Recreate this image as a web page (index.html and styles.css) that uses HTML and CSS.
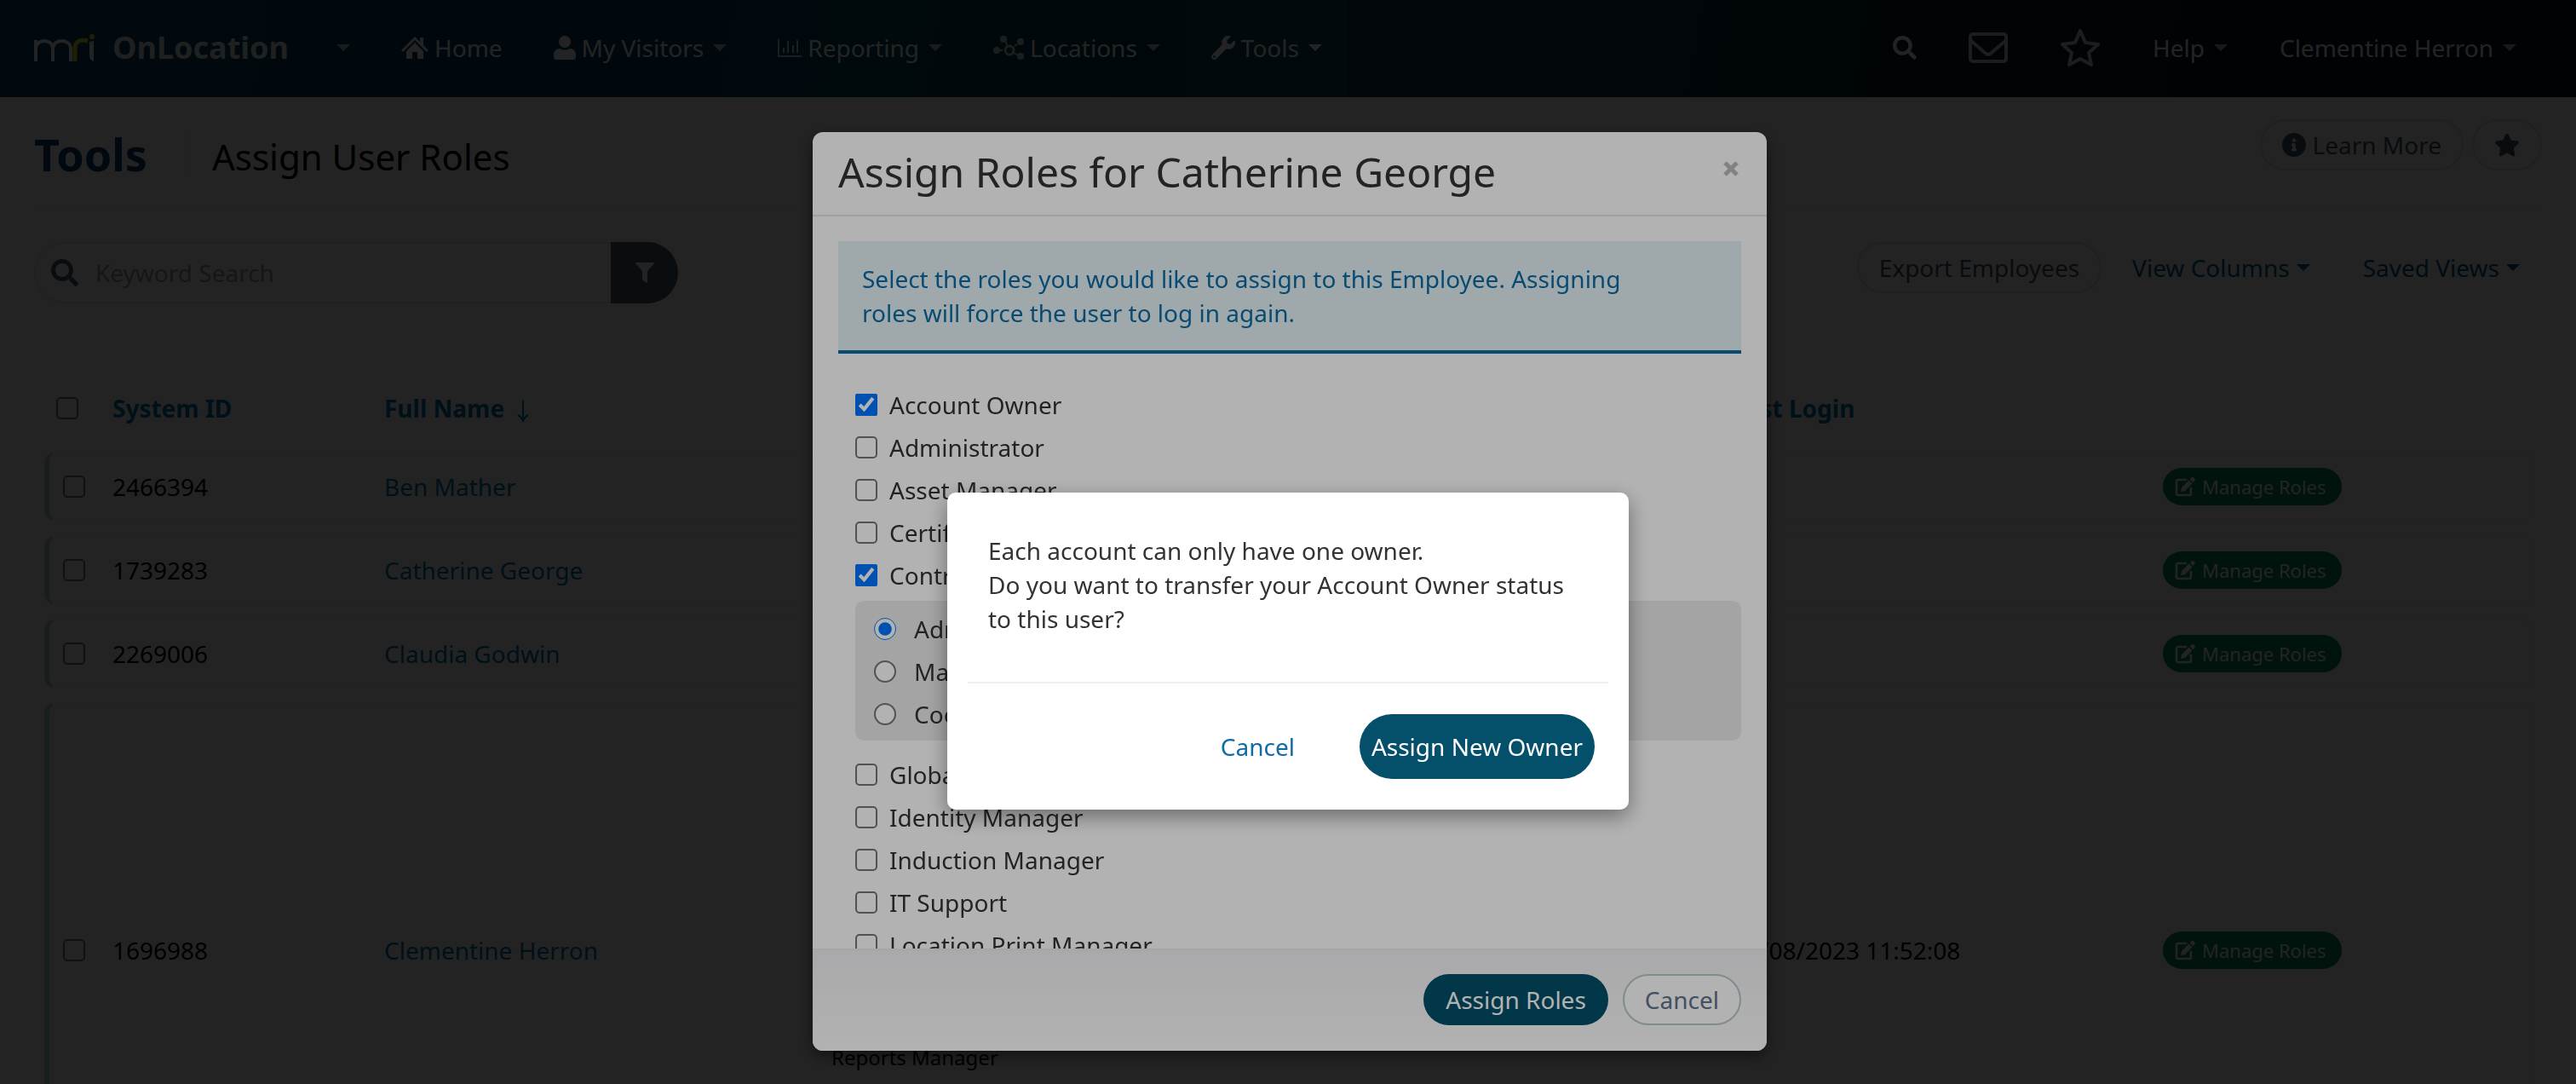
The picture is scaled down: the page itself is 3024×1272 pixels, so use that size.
FILE: index.html
```html
<!DOCTYPE html>
<html lang="en">
<head>
  <meta charset="UTF-8">
  <meta name="viewport" content="width=device-width, initial-scale=1.0">
  <title>Assign User Roles</title>
  <link rel="stylesheet" href="styles.css">
</head>
<body>

<!-- Shared icons -->
<svg class="icon-defs" aria-hidden="true">
  <symbol id="icon-search" viewBox="0 0 512 512"><path d="M505 442.7L405.3 343c-4.5-4.5-10.6-7-17-7H372c27.6-35.3 44-79.7 44-128C416 93.1 322.9 0 208 0S0 93.1 0 208s93.1 208 208 208c48.3 0 92.7-16.4 128-44v16.3c0 6.4 2.5 12.5 7 17l99.7 99.7c9.4 9.4 24.6 9.4 33.9 0l28.3-28.3c9.4-9.4 9.4-24.6.1-34zM208 336c-70.7 0-128-57.2-128-128 0-70.7 57.2-128 128-128 70.7 0 128 57.2 128 128 0 70.7-57.2 128-128 128z"/></symbol>
  <symbol id="icon-edit" viewBox="0 0 24 24"><path d="M14 4H4a2 2 0 0 0-2 2v14a2 2 0 0 0 2 2h13a2 2 0 0 0 2-2v-7" fill="none" stroke="currentColor" stroke-width="2.6"/><path d="M16.5 4.5l4 4-8.500 8.500-5 1 1-5zM17.700 3.300l2-2c.7-.7 1.600-.7 2.300 0l1.400 1.400c.7.7.7 1.600 0 2.300l-2 2z"/></symbol>
</svg>

<nav class="navbar">
  <a class="brand" href="#">
    <svg class="brand-logo" viewBox="0 0 72 32" aria-hidden="true">
      <path d="M2 32V7M2 17C2 5 22 5 22 17V32M22 17C22 5 43 5 43 17V32" fill="none" stroke="#fff" stroke-width="4"/>
      <path d="M48 32V17C48 8 54 6 63 8" fill="none" stroke="#d9e021" stroke-width="5"/>
      <circle cx="68" cy="3" r="3" fill="#d9e021"/>
      <path d="M65 9l5-1v24c-3-1-5-3-5-6z" fill="#fff"/>
    </svg>
    <span>OnLocation</span>
  </a>
  <button class="nav-item" aria-label="Switch product"><i class="caret"></i></button>
  <a class="nav-item" href="#">
    <svg class="icon-home" viewBox="0 0 32 26" aria-hidden="true"><path d="M16 0l6 6V1h4v9l6 6-2 2L16 4 2 18l-2-2z"/><path d="M16 7l10 10v9h-7v-8h-6v8H6v-9z"/></svg>
    Home
  </a>
  <a class="nav-item" href="#">
    <svg class="icon-user" viewBox="0 0 26 28" aria-hidden="true"><circle cx="13" cy="7" r="7"/><path d="M0 25v-3c0-4 3-7 7-7 4 2 8 2 12 0 4 0 7 3 7 7v3c0 2-1 3-3 3H3c-2 0-3-1-3-3z"/></svg>
    My Visitors <i class="caret"></i>
  </a>
  <a class="nav-item" href="#">
    <svg class="icon-chart" viewBox="0 0 28 22" aria-hidden="true"><path d="M1 0v21h27M7 17v-6M12 17V3M18 17V8M23 17V2" fill="none" stroke="currentColor" stroke-width="2"/></svg>
    Reporting <i class="caret"></i>
  </a>
  <a class="nav-item" href="#">
    <svg class="icon-nodes" viewBox="0 0 36 28" aria-hidden="true"><circle cx="19" cy="17" r="5" fill="none" stroke="currentColor" stroke-width="3"/><path d="M13 4l4 9M22 19l9 5M25 12l3-2M8 17h3" stroke="currentColor" stroke-width="2"/><circle cx="12" cy="4" r="4"/><circle cx="32" cy="7" r="4"/><circle cx="4" cy="17" r="4"/><circle cx="32" cy="24" r="4"/></svg>
    Locations <i class="caret"></i>
  </a>
  <a class="nav-item active" href="#">
    <svg class="icon-wrench" viewBox="0 0 512 512" aria-hidden="true"><path d="M507.73 109.1c-2.24-9.03-13.54-12.09-20.12-5.51l-74.36 74.36-67.88-11.31-11.31-67.88 74.36-74.36c6.62-6.62 3.43-17.9-5.66-20.16-47.38-11.74-99.55.91-136.58 37.93-39.64 39.64-50.55 97.1-34.05 147.2L18.74 402.76c-24.99 24.99-24.99 65.51 0 90.5 24.99 24.99 65.51 24.99 90.5 0l213.21-213.21c50.12 16.71 107.47 5.68 147.37-34.22 37.07-37.07 49.7-89.32 37.91-136.73zM64 472c-13.25 0-24-10.75-24-24 0-13.26 10.75-24 24-24s24 10.74 24 24c0 13.25-10.75 24-24 24z"/></svg>
    Tools <i class="caret"></i>
  </a>

  <div class="nav-right">
    <button class="nav-item" aria-label="Search"><svg class="icon-nav-search"><use href="#icon-search"/></svg></button>
    <button class="nav-item" aria-label="Messages">
      <svg class="icon-mail" viewBox="0 0 46 36"><rect x="2" y="2" width="42" height="32" rx="3" fill="none" stroke="currentColor" stroke-width="4"/><path d="M3 10l15 13c4 4 6 4 10 0l15-13" fill="none" stroke="currentColor" stroke-width="4"/></svg>
    </button>
    <button class="nav-item" aria-label="Favourites">
      <svg class="icon-star-outline" viewBox="0 0 48 46"><path d="M24 3l6 14 15 2L34 29l3 14L24 36l-13 7L14 29 3 19l15-2z" fill="none" stroke="currentColor" stroke-width="4" stroke-linejoin="round"/></svg>
    </button>
    <a class="nav-item" href="#">Help <i class="caret"></i></a>
    <a class="nav-item" href="#">Clementine Herron <i class="caret"></i></a>
  </div>
</nav>

<main class="page">
  <header class="page-header">
    <h1>Tools</h1>
    <h2>Assign User Roles</h2>
    <div class="page-actions">
      <button class="btn btn-outline">
        <svg class="icon-info" viewBox="8 8 496 496" aria-hidden="true"><path d="M256 8C119.043 8 8 119.083 8 256c0 136.997 111.043 248 248 248s248-111.003 248-248C504 119.083 392.957 8 256 8zm0 110c23.196 0 42 18.804 42 42s-18.804 42-42 42-42-18.804-42-42 18.804-42 42-42zm56 254c0 6.627-5.373 12-12 12h-88c-6.627 0-12-5.373-12-12v-24c0-6.627 5.373-12 12-12h12v-64h-12c-6.627 0-12-5.373-12-12v-24c0-6.627 5.373-12 12-12h64c6.627 0 12 5.373 12 12v100h12c6.627 0 12 5.373 12 12v24z"/></svg>
        Learn More
      </button>
      <button class="btn btn-outline" aria-label="Add to favourites">
        <svg class="icon-star" viewBox="0 0 576 512"><path d="M259.3 17.8L194 150.2 47.9 171.5c-26.2 3.8-36.7 36.1-17.7 54.6l105.7 103-25 145.5c-4.5 26.3 23.2 46 46.4 33.7L288 439.6l130.7 68.7c23.2 12.2 50.9-7.4 46.4-33.7l-25-145.5 105.7-103c19-18.5 8.5-50.8-17.7-54.6L382 150.2 316.7 17.8c-11.7-23.6-45.6-23.9-57.4 0z"/></svg>
      </button>
    </div>
  </header>

  <div class="toolbar">
    <div class="search-box">
      <svg class="icon-search" aria-hidden="true"><use href="#icon-search"/></svg>
      <input type="text" placeholder="Keyword Search" aria-label="Keyword Search">
      <button class="filter-btn" aria-label="Filter"><svg viewBox="0 0 22 24"><path d="M1 0h20c1 0 1 1 .5 2L14 10v13c0 1-1 1-2 .5L9 21c-.7-.6-1-1-1-2v-9L.5 2C0 1 0 0 1 0z"/></svg></button>
    </div>
    <div class="toolbar-actions">
      <button class="btn btn-outline">Export Employees</button>
      <a class="menu-link" href="#">View Columns <i class="caret"></i></a>
      <a class="menu-link" href="#">Saved Views <i class="caret"></i></a>
    </div>
  </div>

  <table class="users">
    <colgroup>
      <col class="col-check"><col class="col-id"><col class="col-name"><col><col class="col-login"><col class="col-manage">
    </colgroup>
    <thead>
      <tr>
        <th><input type="checkbox" aria-label="Select all"></th>
        <th>System ID</th>
        <th>Full Name <svg class="icon-sort" viewBox="0 0 14 26" aria-hidden="true"><path d="M7 0v25M1 18q4 2 6 7q2-5 6-7" fill="none" stroke="currentColor" stroke-width="2"/></svg></th>
        <th>Roles</th>
        <th>Last Login</th>
        <th></th>
      </tr>
    </thead>
    <tbody>
      <tr>
        <td><input type="checkbox" aria-label="Select Ben Mather"></td>
        <td>2466394</td>
        <td><a href="#">Ben Mather</a></td>
        <td></td>
        <td></td>
        <td><button class="manage-btn"><svg><use href="#icon-edit"/></svg>Manage Roles</button></td>
      </tr>
      <tr>
        <td><input type="checkbox" aria-label="Select Catherine George"></td>
        <td>1739283</td>
        <td><a href="#">Catherine George</a></td>
        <td></td>
        <td></td>
        <td><button class="manage-btn"><svg><use href="#icon-edit"/></svg>Manage Roles</button></td>
      </tr>
      <tr>
        <td><input type="checkbox" aria-label="Select Claudia Godwin"></td>
        <td>2269006</td>
        <td><a href="#">Claudia Godwin</a></td>
        <td></td>
        <td></td>
        <td><button class="manage-btn"><svg><use href="#icon-edit"/></svg>Manage Roles</button></td>
      </tr>
      <tr class="current-user">
        <td><input type="checkbox" aria-label="Select Clementine Herron"></td>
        <td>1696988</td>
        <td><a href="#">Clementine Herron</a></td>
        <td>
          <ul class="role-names">
            <li>Account Owner</li>
            <li>Administrator</li>
            <li>Asset Manager</li>
            <li>Contractor Manager</li>
            <li>Global Manager</li>
            <li>Identity Manager</li>
            <li>Induction Manager</li>
            <li>IT Support</li>
            <li>Location Print Manager</li>
            <li>Reports Manager</li>
            <li>Security Manager</li>
            <li>Vehicle Manager</li>
            <li>Visitor Manager</li>
          </ul>
        </td>
        <td>03/08/2023 11:52:08</td>
        <td><button class="manage-btn"><svg><use href="#icon-edit"/></svg>Manage Roles</button></td>
      </tr>
    </tbody>
  </table>
</main>

<!-- Assign roles modal -->
<div class="overlay overlay-modal">
  <form class="modal" role="dialog" aria-labelledby="modal-title">
    <div class="modal-header">
      <h3 id="modal-title">Assign Roles for Catherine George</h3>
      <button type="button" class="close" aria-label="Close"><svg viewBox="0 0 20 20"><path d="M3 3l14 14M17 3L3 17" stroke="currentColor" stroke-width="5"/></svg></button>
    </div>
    <div class="modal-body">
      <p class="alert">Select the roles you would like to assign to this Employee. Assigning roles will force the user to log in again.</p>
      <div class="roles">
        <label><input type="checkbox" checked>Account Owner</label>
        <label><input type="checkbox">Administrator</label>
        <label><input type="checkbox">Asset Manager</label>
        <label><input type="checkbox">Certification Manager</label>
        <label><input type="checkbox" checked>Contractor Manager</label>
        <div class="sub-roles">
          <label><input type="radio" name="contractor" checked>Administrator</label>
          <label><input type="radio" name="contractor">Manager</label>
          <label><input type="radio" name="contractor">Coordinator</label>
        </div>
        <label><input type="checkbox">Global Manager</label>
        <label><input type="checkbox">Identity Manager</label>
        <label><input type="checkbox">Induction Manager</label>
        <label><input type="checkbox">IT Support</label>
        <label><input type="checkbox">Location Print Manager</label>
      </div>
    </div>
    <div class="modal-footer">
      <button type="button" class="btn btn-primary">Assign Roles</button>
      <button type="button" class="btn btn-cancel">Cancel</button>
    </div>
  </form>
</div>

<!-- Owner transfer confirmation -->
<div class="overlay overlay-confirm">
  <div class="confirm" role="alertdialog" aria-label="Transfer account owner">
    <p>Each account can only have one owner.<br>Do you want to transfer your Account Owner status to this user?</p>
    <div class="confirm-footer">
      <button class="btn-link">Cancel</button>
      <button class="btn-confirm">Assign New Owner</button>
    </div>
  </div>
</div>

</body>
</html>
```
FILE: styles.css
```css
* {
  box-sizing: border-box;
}

body {
  margin: 0;
  height: 100vh;
  overflow: hidden;
  font-family: "Noto Sans", sans-serif;
  font-size: 28px;
  line-height: 40px;
  color: #000;
  background-color: #fff;
}

h1, h2, h3, p, ul {
  margin: 0;
  padding: 0;
}

a {
  text-decoration: none;
}

button {
  font: inherit;
  color: inherit;
  background: none;
  border: none;
  padding: 0;
  cursor: pointer;
}

svg {
  fill: currentColor;
  flex-shrink: 0;
}

input[type="checkbox"],
input[type="radio"] {
  width: 26px;
  height: 26px;
  margin: 0;
  flex-shrink: 0;
}

input[type="checkbox"]:not(:checked),
input[type="radio"]:not(:checked) {
  appearance: none;
  border: 2px solid #767676;
  border-radius: 5px;
  background-color: #fff;
}

input[type="radio"]:not(:checked) {
  border-radius: 50%;
}

.icon-defs {
  display: none;
}

.caret {
  display: inline-block;
  border: 8px solid transparent;
  border-top-color: currentColor;
  border-bottom: none;
}

/* Navbar */
.navbar {
  display: flex;
  height: 114px;
  padding: 0 40px;
  color: #fff;
  background: linear-gradient(100deg, #0c3c6c 0%, #07405c 35%, #023244 60%, #001028 100%);
}

.brand {
  display: flex;
  align-items: center;
  gap: 20px;
  padding: 0 22px 2px 0;
  font-size: 36px;
  font-weight: bold;
  color: #e0e6e8;
}

.brand-logo {
  width: 72px;
  height: 32px;
}

.nav-item {
  display: flex;
  align-items: center;
  gap: 7px;
  padding: 0 30px 2px;
  color: #fff;
}

.nav-item .caret {
  margin-left: 4px;
  opacity: 0.7;
}

.nav-item.active {
  background-color: rgba(255, 255, 255, 0.08);
}

.nav-item.active .caret {
  opacity: 1;
}

.nav-right {
  display: flex;
  gap: 1px;
  margin-left: auto;
}

.icon-home { width: 32px; height: 26px; }
.icon-user { width: 26px; height: 28px; }
.icon-chart { width: 28px; height: 22px; opacity: 0.8; }
.icon-nodes { width: 36px; height: 28px; opacity: 0.8; }
.icon-wrench { width: 28px; height: 28px; }
.icon-nav-search { width: 28px; height: 28px; }
.icon-mail { width: 46px; height: 36px; opacity: 0.8; }
.icon-star-outline { width: 48px; height: 46px; opacity: 0.8; }

/* Page header */
.page {
  padding: 0 40px;
}

.page-header {
  display: flex;
  align-items: center;
  height: 130px;
  padding-top: 6px;
  border-bottom: 2px solid #f4f5f6;
}

.page-header h1 {
  padding-right: 44px;
  border-right: 2px solid #f4f5f6;
  font-size: 52px;
  line-height: 52px;
  color: #0b3c74;
}

.page-header h2 {
  padding: 6px 0 0 30px;
  font-size: 42px;
  font-weight: normal;
}

.page-actions {
  display: flex;
  gap: 10px;
  margin-left: auto;
  padding-bottom: 22px;
}

.btn {
  display: flex;
  align-items: center;
  gap: 8px;
  height: 60px;
  padding: 0 24px;
  border: 2px solid transparent;
  border-radius: 30px;
}

.btn-outline {
  border-color: #dcdfe2;
  color: #3d5a70;
}

.icon-info { width: 28px; height: 28px; }
.icon-star { width: 30px; height: 28px; }

/* Toolbar */
.toolbar {
  display: flex;
  justify-content: space-between;
  align-items: flex-start;
  padding-top: 40px;
}

.search-box {
  display: flex;
  align-items: center;
  width: 756px;
  height: 72px;
  padding-left: 18px;
  border: 2px solid #e8eaec;
  border-right: none;
  border-radius: 36px;
}

.icon-search {
  width: 32px;
  height: 32px;
  color: #466478;
}

.search-box input {
  flex: 1;
  min-width: 0;
  padding: 0 20px;
  border: none;
  outline: none;
  background: none;
  font: inherit;
}

.search-box input::placeholder {
  color: #98a0a8;
  opacity: 1;
}

.filter-btn {
  display: flex;
  align-items: center;
  justify-content: center;
  width: 79px;
  height: 72px;
  border-radius: 0 36px 36px 0;
  background-color: #466478;
  color: #fff;
}

.filter-btn svg {
  width: 22px;
  height: 24px;
}

.toolbar-actions {
  display: flex;
  align-items: center;
  padding-right: 26px;
}

.menu-link {
  display: flex;
  align-items: center;
  gap: 8px;
  margin-left: 36px;
  color: #005a90;
}

.menu-link + .menu-link {
  margin-left: 62px;
}

/* Users table */
.users {
  width: calc(100% - 22px);
  margin: 72px 10px 0 12px;
  table-layout: fixed;
  border-collapse: separate;
  border-spacing: 0 16px;
}

.col-check { width: 80px; }
.col-id { width: 319px; }
.col-name { width: 525px; }
.col-login { width: 505px; }
.col-manage { width: 435px; }

.users th,
.users td {
  padding: 0;
  text-align: left;
}

.users th {
  height: 70px;
  color: #0078b4;
}

.users th:first-child {
  padding-left: 14px;
}

.users td {
  height: 82px;
  border-top: 1px solid #f4f5f6;
  border-bottom: 1px solid #f4f5f6;
}

.users td:first-child {
  padding-left: 16px;
  border-left: 6px solid #b4dccf;
  border-radius: 14px 0 0 14px;
}

.users td:last-child {
  border-right: 1px solid #f4f5f6;
  border-radius: 0 14px 14px 0;
}

.users .current-user td:first-child {
  border-left-color: #b8d4dc;
}

.users input {
  display: block;
}

.users a {
  color: #0078b4;
}

.icon-sort {
  width: 14px;
  height: 26px;
  margin-left: 8px;
  vertical-align: middle;
}

.role-names {
  padding: 17px 0;
  list-style: none;
  font-size: 24px;
  line-height: 42px;
}

.manage-btn {
  display: flex;
  align-items: center;
  gap: 8px;
  height: 44px;
  padding: 0 18px 0 14px;
  border-radius: 22px;
  background-color: #0a8a64;
  color: #fff;
  font-size: 22px;
}

.manage-btn svg {
  width: 24px;
  height: 24px;
}

/* Overlays */
.overlay {
  position: fixed;
  inset: 0;
  display: flex;
  justify-content: center;
}

.overlay-modal {
  align-items: flex-start;
  padding: 155px 0 0 4px;
  background-color: rgba(0, 0, 0, 0.8);
}

.overlay-confirm {
  align-items: flex-start;
  padding-top: 578px;
  background-color: rgba(0, 0, 0, 0.3);
}

/* Modal */
.modal {
  display: flex;
  flex-direction: column;
  width: 1120px;
  max-width: 100%;
  height: calc(100vh - 194px);
  overflow: hidden;
  border-radius: 12px;
  background-color: #fff;
  box-shadow: 0 6px 18px rgba(0, 0, 0, 0.5);
  color: #333;
}

.modal-header {
  display: flex;
  justify-content: space-between;
  padding: 18px 30px 21px;
  border-bottom: 2px solid #e5e5e5;
}

.modal-header h3 {
  font-size: 48px;
  font-weight: normal;
  line-height: 58px;
}

.close {
  width: 24px;
  height: 50px;
  color: #bbb;
}

.close svg {
  display: block;
  width: 24px;
  height: 20px;
}

.modal-body {
  flex: 1;
  overflow: hidden;
  padding: 29px 30px 0;
}

.alert {
  padding: 24px 70px 24px 28px;
  border-bottom: 4px solid #0e6ba4;
  background-color: #e4f3f5;
  color: #0e6ba4;
}

.roles {
  padding: 35px 0 0 20px;
}

.roles label {
  display: flex;
  align-items: center;
  gap: 14px;
  height: 50px;
}

.sub-roles {
  margin: 5px 0 15px;
  padding: 8px 22px 6px;
  border-radius: 10px;
  background-color: #ebebeb;
}

.sub-roles label {
  gap: 21px;
}

.modal-footer {
  display: flex;
  justify-content: flex-end;
  gap: 17px;
  padding: 28px 30px 30px;
  border-top: 2px solid #eeeef0;
  background: linear-gradient(#f3f3f6, #fff);
}

.btn-primary {
  background-color: #044f69;
  color: #fff;
}

.btn-cancel {
  border-color: #b8c8cc;
  background-color: #fff;
  color: #62718a;
}

/* Confirm dialog */
.confirm {
  width: 800px;
  max-width: 100%;
  padding: 48px 24px 36px;
  border-radius: 10px;
  background-color: #fff;
  box-shadow: 0 8px 24px rgba(0, 0, 0, 0.4);
  color: #333;
}

.confirm p {
  padding: 0 24px 54px;
  border-bottom: 2px solid #eceff0;
}

.confirm-footer {
  display: flex;
  justify-content: flex-end;
  align-items: center;
  gap: 76px;
  padding: 36px 16px 0;
}

.btn-link {
  color: #0e6ba4;
}

.btn-confirm {
  height: 76px;
  padding: 0 14px;
  border-radius: 38px;
  background-color: #044f69;
  color: #fff;
}
```
